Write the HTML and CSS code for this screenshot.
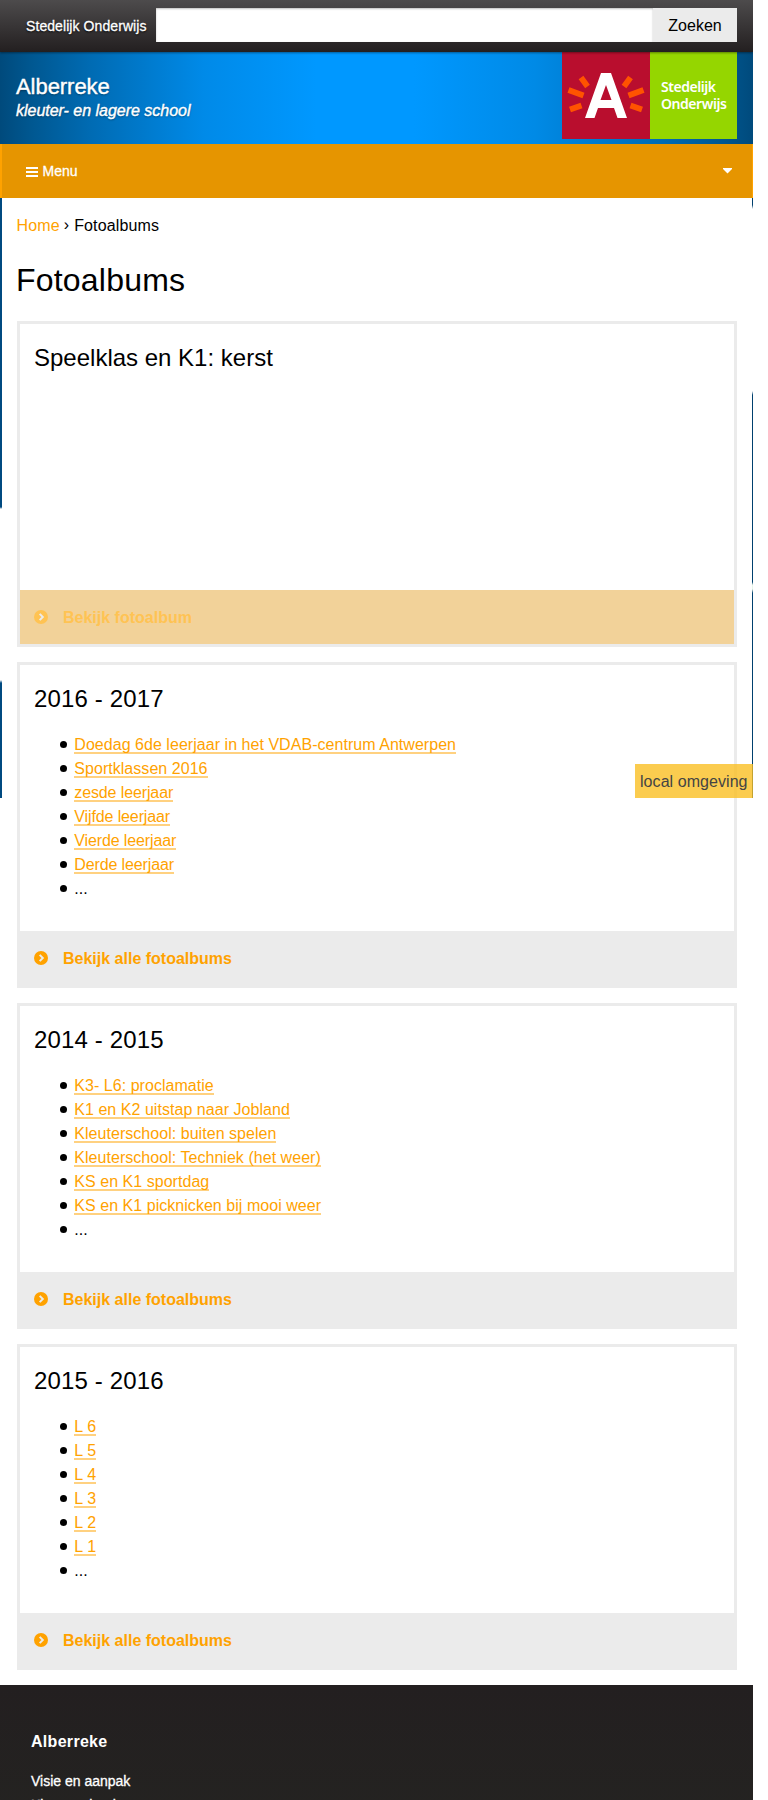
FILE: index.html
```html
<!DOCTYPE html>
<html lang="nl">
<head>
<meta charset="utf-8">
<title>Fotoalbums</title>
<link rel="stylesheet" href="styles.css">
</head>
<body>
<svg class="sprite" aria-hidden="true">
  <symbol id="chevron-circle" viewBox="0 0 14 14"><circle cx="7" cy="7" r="7" fill="currentColor"/><path class="chevron" d="M5.7 3.9 8.8 7l-3.1 3.1"/></symbol>
</svg>
<div class="page">
  <div class="topbar">
    <span class="topbar-title">Stedelijk Onderwijs</span>
    <form class="search"><input type="text" aria-label="Zoeken"><button type="button">Zoeken</button></form>
  </div>
  <header class="header">
    <div class="brand"><div class="brand-name">Alberreke</div><div class="brand-sub">kleuter- en lagere school</div></div>
    <div class="logo">
      <svg class="logo-mark" viewBox="0 0 88 87">
        <rect width="88" height="87" fill="#b90e2e"/>
        <g fill="none" stroke="#ff5300" stroke-width="5.8">
          <path d="M19 25.500 25.500 34.500M6.500 38 21.500 43.500M8 57.500 19.500 53.500M68.500 25.500 62 34.500M81.500 38 66.500 43.500M68.500 53.500 80 57.500"/>
        </g>
        <path fill="#fff" fill-rule="evenodd" d="M39 21h10l16 45H55.500l-3.500-10H36l-3.500 10H23zM44 33l-5.500 15h11z"/>
      </svg>
      <div class="logo-text"><span>Stedelijk</span><span>Onderwijs</span></div>
    </div>
  </header>
  <nav class="menu">
    <svg class="bars" viewBox="0 0 12 10"><path d="M0 1h12M0 5h12M0 9h12" stroke="#fff" stroke-width="2"/></svg>
    <span class="menu-label">Menu</span>
    <svg class="caret" viewBox="0 0 9 6"><path d="M0 0h9v1L4.500 5.500 0 1z" fill="#fff"/></svg>
  </nav>
  <main class="content">
    <div class="crumbs"><a>Home</a><span class="sep">›</span><span>Fotoalbums</span></div>
    <h1>Fotoalbums</h1>
    <section class="card">
      <h2>Speelklas en K1: kerst</h2>
      <a class="more faded"><svg><use href="#chevron-circle"/></svg><span>Bekijk fotoalbum</span></a>
    </section>
    <section class="card">
      <h2 class="year">2016 - 2017</h2>
      <ul><li><a>Doedag 6de leerjaar in het VDAB-centrum Antwerpen</a></li><li><a>Sportklassen 2016</a></li><li><a class="tight">zesde leerjaar</a></li><li><a class="tight">Vijfde leerjaar</a></li><li><a class="tight">Vierde leerjaar</a></li><li><a class="tight">Derde leerjaar</a></li><li>...</li></ul>
      <a class="more"><svg><use href="#chevron-circle"/></svg><span>Bekijk alle fotoalbums</span></a>
    </section>
    <section class="card">
      <h2 class="year">2014 - 2015</h2>
      <ul><li><a>K3- L6: proclamatie</a></li><li><a>K1 en K2 uitstap naar Jobland</a></li><li><a>Kleuterschool: buiten spelen</a></li><li><a>Kleuterschool: Techniek (het weer)</a></li><li><a>KS en K1 sportdag</a></li><li><a>KS en K1 picknicken bij mooi weer</a></li><li>...</li></ul>
      <a class="more"><svg><use href="#chevron-circle"/></svg><span>Bekijk alle fotoalbums</span></a>
    </section>
    <section class="card">
      <h2 class="year">2015 - 2016</h2>
      <ul><li><a>L 6</a></li><li><a>L 5</a></li><li><a>L 4</a></li><li><a>L 3</a></li><li><a>L 2</a></li><li><a>L 1</a></li><li>...</li></ul>
      <a class="more"><svg><use href="#chevron-circle"/></svg><span>Bekijk alle fotoalbums</span></a>
    </section>
  </main>
  <footer class="footer">
    <h3>Alberreke</h3>
    <div class="footer-links"><span>Visie en aanpak</span><span>Kleuterschool</span></div>
  </footer>
  <div class="edge edge-left"></div>
  <div class="edge edge-right"></div>
  <div class="env">local omgeving</div>
</div>
</body>
</html>
```

FILE: styles.css
```css
* { box-sizing: border-box; }
body { margin: 0; background: #fff; color: #000; font: 16px/24px "Liberation Sans", Arial, sans-serif; }
.sprite { display: none; }
.page { position: relative; width: 753px; height: 1800px; overflow: hidden; display: flex; flex-direction: column; }

.topbar { position: relative; z-index: 1; height: 52px; flex: none; display: flex; align-items: flex-start; padding: 8px 16px 0 26px; background: linear-gradient(#4d4b4c, #231f20); box-shadow: 0 1px 2px rgba(0,0,0,.4); }
.topbar-title { width: 130px; flex: none; color: #fff; font-size: 14px; line-height: 36px; letter-spacing: .08px; white-space: nowrap; text-shadow: 0 1px 2px #000; -webkit-text-stroke: .3px #fff; }
.search { display: flex; flex: 1; height: 34px; }
.search input { flex: 1; min-width: 0; border: 0; padding: 0; background: #fff; box-shadow: inset 0 1px 2px rgba(0,0,0,.25); }
.search button { width: 84px; border: 0; padding: 1px 0 0; background: #ebebeb; color: #000; font: 16px/33px "Liberation Sans", Arial, sans-serif; }

.header { height: 92px; flex: none; display: flex; justify-content: space-between; padding: 0 16px; background: linear-gradient(90deg, #004a7c 0, #005790 4%, #006bb3 12%, #008ae8 27%, #0098ff 42%, #0098ff 55%, #008ae6 71%, #006bb3 88%, #005790 96%, #004a7c 100%); }
.brand { padding-top: 22px; color: #fff; text-shadow: 0 1px 2px rgba(0,0,0,.4); -webkit-text-stroke: .4px #fff; }
.brand-name { font-size: 22px; line-height: 26px; letter-spacing: -.05px; }
.brand-sub { font-size: 16px; line-height: 22px; font-style: italic; letter-spacing: -.02px; }
.logo { display: flex; width: 175px; height: 87px; }
.logo-mark { width: 88px; height: 87px; flex: none; }
.logo-text { flex: 1; display: flex; flex-direction: column; padding: 26px 0 0 11px; background: #95d600; color: #fff; font: 600 14px/17px "Noto Sans", sans-serif; letter-spacing: -.45px; }

.menu { height: 54px; flex: none; display: flex; align-items: center; padding: 0 20px 0 24px; background: #e69500; border: solid #ffa200; border-width: 0 1px 0 2px; color: #fff; font-size: 14px; -webkit-text-stroke: .3px #fff; }
.bars { width: 12px; height: 10px; margin-top: 2px; }
.menu-label { margin-left: 4.500px; }
.caret { width: 9px; height: 6px; margin-left: auto; }

.content { flex: none; padding: 0 16px 0 17px; height: 1487px; }
.crumbs { display: flex; padding-top: 16px; height: 39px; letter-spacing: .13px; margin-left: -.5px; }
.crumbs a, li a { color: #ffa200; }
.sep { margin: 0 5px 0 4px; line-height: 22px; }
h1, h2, h3 { margin: 0; font-weight: 400; }
h1 { height: 84px; margin-left: -1px; padding-top: 24px; font-size: 32px; line-height: 38px; letter-spacing: .2px; }
.card { height: 326px; margin-bottom: 15px; border: 3px solid #ebebeb; display: flex; flex-direction: column; }
h2 { padding: 17px 15px 0 14px; font-size: 24px; line-height: 34px; }
.year { letter-spacing: .15px; }
ul { margin: 17px 0 0; padding: 0 0 0 40px; list-style: none; }
li { display: flex; height: 24px; }
li::before { content: ""; width: 7px; height: 7px; margin: 8px 7.300px 0 0; border-radius: 50%; background: #000; }
li a { height: 17px; margin-top: 4px; border-bottom: 2px solid #ffd180; line-height: 16px; letter-spacing: .04px; }
li a.tight { letter-spacing: -.12px; }
.more { margin-top: auto; height: 54px; flex: none; display: flex; align-items: center; gap: 15px; padding-left: 14px; background: #ebebeb; color: #ffa200; font-weight: 700; }
.more svg { width: 14px; height: 14px; }
.more span { padding-top: 1px; }
.chevron { fill: none; stroke: #ebebeb; stroke-width: 2; }
.faded { background: #f2d299; color: #ffc353; }
.faded .chevron { stroke: #f2d299; }

.footer { flex: 1; padding: 45px 31px 0; background: linear-gradient(#231f20, #242321); color: #fff; }
h3 { font-size: 16px; line-height: 24px; font-weight: 700; letter-spacing: .3px; }
.footer-links { display: flex; flex-direction: column; margin-top: 15px; font-size: 14px; line-height: 24px; -webkit-text-stroke: .3px #fff; }

.edge { position: absolute; top: 198px; height: 600px; }
.edge-left { left: 0; width: 2px; background: linear-gradient(#004a80 0 309px, #fff 311px 482px, #004a80 485px); }
.edge-right { right: 0; width: 1px; background: linear-gradient(#00406e 0 7px, #fff 11px 193px, #00406e 197px 384px, #e8f5e8 387px 391px, #00406e 395px); }
.env { position: absolute; right: 0; top: 764px; width: 118px; height: 34px; padding: 1px 0 0 5px; line-height: 34px; letter-spacing: .06px; background: rgba(250,190,30,.78); color: #444; }
```
